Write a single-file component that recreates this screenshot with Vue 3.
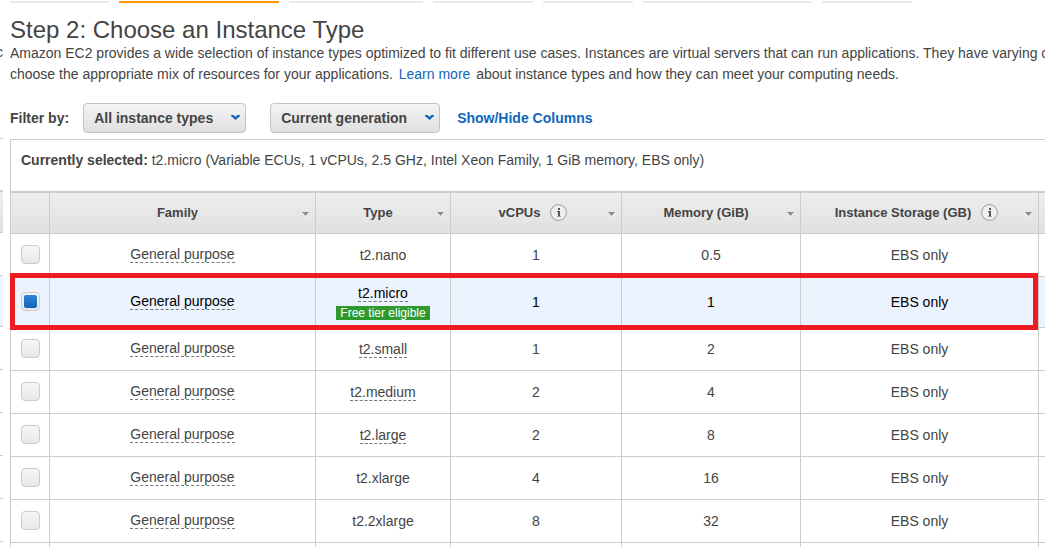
<script setup>
import { ref } from 'vue'

const steps = [
  { size: 'w-ami', active: false },
  { size: 'w-type', active: true },
  { size: 'w-configure', active: false },
  { size: 'w-storage', active: false },
  { size: 'w-tags', active: false },
  { size: 'w-security', active: false },
  { size: 'w-review', active: false },
]

const columns = [
  { label: 'Family', info: false },
  { label: 'Type', info: false },
  { label: 'vCPUs', info: true },
  { label: 'Memory (GiB)', info: false },
  { label: 'Instance Storage (GB)', info: true },
]

const rows = [
  { type: 't2.nano', tip: false, vcpus: '1', memory: '0.5' },
  { type: 't2.micro', tip: true, vcpus: '1', memory: '1', free: true },
  { type: 't2.small', tip: true, vcpus: '1', memory: '2' },
  { type: 't2.medium', tip: true, vcpus: '2', memory: '4' },
  { type: 't2.large', tip: true, vcpus: '2', memory: '8' },
  { type: 't2.xlarge', tip: false, vcpus: '4', memory: '16' },
  { type: 't2.2xlarge', tip: false, vcpus: '8', memory: '32' },
]

const selected = ref('t2.micro')
</script>

<template>
  <div class="page">
    <div class="edge" aria-hidden="true">
      <div class="edge-top"><span>c</span></div>
      <div class="edge-bar"></div>
      <div class="edge-head"></div>
      <div
        v-for="row in rows"
        :key="row.type"
        class="edge-row"
        :class="{ picked: row.type === selected }"
      ></div>
    </div>

    <main class="main">
      <div class="steps">
        <span
          v-for="step in steps"
          :key="step.size"
          class="step"
          :class="[step.size, { active: step.active }]"
        ></span>
      </div>

      <h1>Step 2: Choose an Instance Type</h1>
      <p class="intro">
        Amazon EC2 provides a wide selection of instance types optimized to fit different use cases. Instances are virtual servers that can run applications. They have varying c<br />
        choose the appropriate mix of resources for your applications.
        <a href="#" class="more">Learn more</a>
        about instance types and how they can meet your computing needs.
      </p>

      <div class="filters">
        <label for="family-filter">Filter by:</label>
        <div class="picker picker-types">
          <select id="family-filter">
            <option>All instance types</option>
          </select>
          <svg class="chevron" width="9" height="5" viewBox="0 0 9 5">
            <path d="M0 0h2.4l2.1 1.8L6.6 0H9v1L4.5 5 0 1z" fill="#1166bb" />
          </svg>
        </div>
        <div class="picker picker-generation">
          <select aria-label="Generation">
            <option>Current generation</option>
          </select>
          <svg class="chevron" width="9" height="5" viewBox="0 0 9 5">
            <path d="M0 0h2.4l2.1 1.8L6.6 0H9v1L4.5 5 0 1z" fill="#1166bb" />
          </svg>
        </div>
        <a href="#" class="columns-link">Show/Hide Columns</a>
      </div>

      <section class="grid">
        <div class="current">
          <b>Currently selected:</b> t2.micro (Variable ECUs, 1 vCPUs, 2.5 GHz, Intel Xeon Family, 1 GiB memory, EBS only)
        </div>
        <table>
          <colgroup>
            <col class="c-check" />
            <col class="c-family" />
            <col class="c-type" />
            <col class="c-vcpus" />
            <col class="c-memory" />
            <col class="c-storage" />
            <col class="c-rest" />
          </colgroup>
          <thead>
            <tr>
              <th></th>
              <th v-for="col in columns" :key="col.label" scope="col">
                <div class="head">
                  <span class="head-label">
                    {{ col.label }}
                    <svg v-if="col.info" class="info" width="17" height="17" viewBox="0 0 17 17">
                      <circle cx="8.5" cy="8.5" r="7.9" fill="#efefef" stroke="#999" stroke-width="1" />
                      <path d="M8 4h2v2H8zM7 7h3v6H8V8H7z" fill="#555" />
                      <path d="M7 12h4v1H7z" fill="#999" />
                    </svg>
                  </span>
                  <svg class="sort" width="7" height="5" viewBox="0 0 7 5">
                    <path d="M0 1h7L3.5 5z" fill="#fff" />
                    <path d="M0 0h7L3.5 4z" fill="#8a8a8a" />
                  </svg>
                </div>
              </th>
              <th></th>
            </tr>
          </thead>
          <tbody>
            <tr v-for="row in rows" :key="row.type" :class="{ picked: row.type === selected }">
              <td class="raised">
                <input
                  type="checkbox"
                  :aria-label="row.type"
                  :checked="row.type === selected"
                  @change="selected = row.type"
                />
                <div v-if="row.type === selected" class="highlight"></div>
              </td>
              <td class="raised"><span class="family">General purpose</span></td>
              <td>
                <span :class="{ tip: row.tip }">{{ row.type }}</span>
                <div v-if="row.free" class="badge">Free tier eligible</div>
              </td>
              <td>{{ row.vcpus }}</td>
              <td>{{ row.memory }}</td>
              <td>EBS only</td>
              <td></td>
            </tr>
            <tr>
              <td v-for="n in 7" :key="n"></td>
            </tr>
          </tbody>
        </table>
      </section>
    </main>
  </div>
</template>

<style>
body {
  background: #fff;
  overflow: hidden;
}
</style>

<style scoped>
.page {
  display: flex;
  height: 100vh;
  overflow: hidden;
  font-family: "Liberation Sans", Arial, sans-serif;
  font-size: 14px;
  line-height: 21px;
  color: #444;
}

/* Sliver of the neighbouring panel */
.edge {
  flex: none;
  width: 3px;
  margin-right: 7px;
  overflow: hidden;
}
.edge-top {
  display: flex;
  justify-content: flex-end;
  box-sizing: border-box;
  height: 139px;
  padding-top: 42px;
  border-bottom: 1px solid #ccc;
}
.edge-bar {
  height: 51px;
  border-bottom: 2px solid #ccc;
}
.edge-head {
  height: 40px;
  border-bottom: 1px solid #ccc;
  background: linear-gradient(#eee, #e0e0e0);
}
.edge-row {
  height: 42px;
  border-bottom: 1px solid #ccc;
}
.edge-row.picked {
  height: 50px;
  background: #eaf3fe;
}

.main {
  flex: 1;
  min-width: 0;
  overflow: hidden;
}

.steps {
  display: flex;
  gap: 10px;
  padding-top: 1px;
}
.step {
  height: 2px;
  background: #eaeaea;
}
.step.active {
  background: #f90;
}
.w-ami { width: 99px; }
.w-type { width: 160px; }
.w-configure { width: 134px; }
.w-storage { width: 100px; }
.w-tags { width: 90px; }
.w-security { width: 169px; }
.w-review { width: 90px; }

h1 {
  margin: 13px 0 0;
  font-size: 24px;
  line-height: 27px;
  font-weight: 400;
}
.intro {
  margin: 0;
  white-space: nowrap;
}
a {
  color: #1166bb;
  text-decoration: none;
}
.more {
  margin: 0 2px;
}

.filters {
  display: flex;
  align-items: center;
  margin: 18px 0 6px;
  font-weight: 700;
}
.picker {
  position: relative;
}
.picker-types {
  width: 163px;
  margin-left: 14px;
}
.picker-generation {
  width: 170px;
  margin-left: 24px;
}
select {
  appearance: none;
  display: block;
  box-sizing: border-box;
  width: 100%;
  height: 30px;
  padding: 0 10px;
  border: 1px solid #c4c4c4;
  border-radius: 4px;
  background: linear-gradient(#f4f4f4, #e0e0e0);
  font: inherit;
  color: inherit;
}
.chevron {
  position: absolute;
  right: 6px;
  top: 12px;
  pointer-events: none;
}
.columns-link {
  margin-left: 17px;
}

.grid {
  border-top: 1px solid #ccc;
  border-left: 1px solid #ccc;
}
.current {
  height: 31px;
  padding: 10px;
  border-bottom: 2px solid #ccc;
  white-space: nowrap;
}
table {
  width: 100%;
  table-layout: fixed;
  border-collapse: separate;
  border-spacing: 0;
}
.c-check { width: 39px; }
.c-family { width: 266px; }
.c-type { width: 135px; }
.c-vcpus { width: 171px; }
.c-memory { width: 179px; }
.c-storage { width: 238px; }
.c-rest { width: 6px; }

th,
td {
  box-sizing: border-box;
  padding: 0;
  border-right: 1px solid #ccc;
  border-bottom: 1px solid #ccc;
  text-align: center;
  vertical-align: middle;
}
th:last-child,
td:last-child {
  border-right: 0;
}
th {
  height: 41px;
  padding-bottom: 2px;
  background: linear-gradient(#eee, #e0e0e0);
  font-size: 13px;
}
td {
  height: 43px;
  line-height: 16px;
}
.raised {
  padding-bottom: 2px;
}
.head {
  display: flex;
  align-items: center;
  gap: 3px;
  padding: 0 6px;
}
.head-label {
  flex: 1;
  display: flex;
  align-items: center;
  justify-content: center;
  gap: 10px;
}
.info,
.sort {
  flex: none;
}
.info {
  margin-right: -4px;
}
.sort {
  margin-top: 4px;
}

tr.picked {
  position: relative;
  color: #000;
}
tr.picked td {
  height: 51px;
  background: #eaf3fe;
}
.highlight {
  position: absolute;
  top: -4px;
  right: 7px;
  bottom: -2px;
  left: -1px;
  border: 5px solid #ed1c24;
  pointer-events: none;
}
.family {
  display: inline-block;
  border-bottom: 1px dashed #777;
}
.tip {
  border-bottom: 1px dashed #777;
}
.badge {
  width: max-content;
  margin: 5px auto 0;
  padding: 0 4px;
  background: #2e9a2e;
  color: #fff;
  font-size: 12px;
  line-height: 14px;
}

input {
  appearance: none;
  display: block;
  box-sizing: border-box;
  width: 19px;
  height: 19px;
  margin: 0 auto;
  border: 1px solid #ccc;
  border-radius: 4px;
  background: linear-gradient(#f6f6f6, #e8e8e8);
}
input:checked {
  padding: 2px;
}
input:checked::before {
  content: "";
  display: block;
  height: 13px;
  border-radius: 2px;
  background: linear-gradient(#2f86dc, #1263b8);
}
</style>
